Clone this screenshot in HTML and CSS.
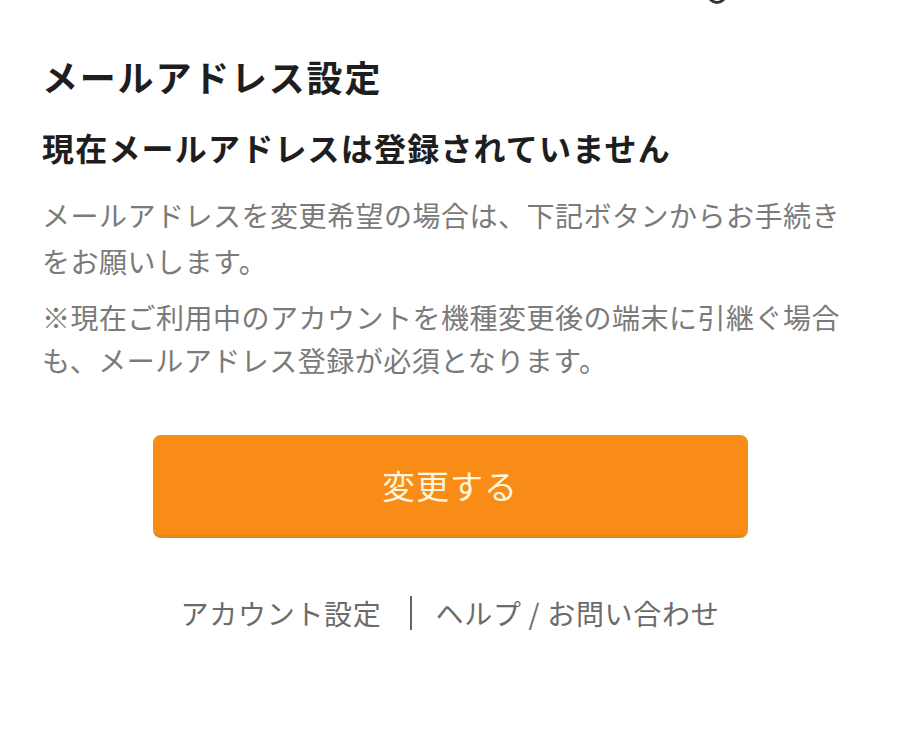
FILE: index.html
```html
<!DOCTYPE html>
<html lang="ja">
<head>
<meta charset="UTF-8" />
<meta name="viewport" content="width=device-width, initial-scale=1" />
<title>メールアドレス設定</title>
<link rel="stylesheet" href="styles.css">
</head>
<body>
<div class="top-edge"></div>
<div class="page">
  <h1 class="title">メールアドレス設定</h1>
  <h2 class="status">現在メールアドレスは登録されていません</h2>

  <p class="note">メールアドレスを変更希望の場合は、下記ボタンからお手続きをお願いします。</p>
  <p class="note">※現在ご利用中のアカウントを機種変更後の端末に引継ぐ場合も、メールアドレス登録が必須となります。</p>

  <div class="actions">
    <button class="change-btn">変更する</button>
  </div>

  <div class="links">
    <a href="#">アカウント設定</a>
    <span class="sep"></span>
    <a href="#">ヘルプ / お問い合わせ</a>
  </div>
</div>
</body>
</html>
```

FILE: styles.css
```css
body {
  margin: 0;
  background: #fff;
  font-family: "Noto Sans CJK JP", "Noto Sans", sans-serif;
  color: #222;
}
.top-edge {
  position: absolute;
  top: -16px;
  left: 707px;
  width: 14px;
  height: 14px;
  border: 3px solid #333;
  border-radius: 50%;
}
.page {
  padding: 51px 42px 0;
}
.title {
  margin: 0;
  font-size: 36px;
  line-height: 50px;
  letter-spacing: 1.8px;
  font-weight: 700;
  color: #1e1e1e;
}
.status {
  margin: 23px 0 0;
  font-size: 32px;
  line-height: 46px;
  letter-spacing: 1.2px;
  font-weight: 700;
  color: #1e1e1e;
}
.note {
  margin: 22px 0 0;
  font-size: 28px;
  line-height: 46px;
  letter-spacing: 0.5px;
  color: #7a7a7a;
}
.note + .note {
  margin-top: 12px;
  line-height: 43px;
}
.actions {
  display: flex;
  justify-content: center;
  margin-top: 53px;
}
.change-btn {
  width: 595px;
  height: 103px;
  border: none;
  border-bottom: 3px solid #dd8a20;
  border-radius: 8px;
  background: #f98c17;
  color: #fff4dc;
  font-family: inherit;
  font-size: 33px;
  letter-spacing: 1px;
  cursor: pointer;
}
.links {
  display: flex;
  justify-content: center;
  align-items: center;
  margin-top: 55px;
}
.links a {
  color: #6b6b6b;
  font-size: 28px;
  line-height: 40px;
  letter-spacing: 0.7px;
  text-decoration: none;
}
.sep {
  width: 2px;
  height: 34px;
  margin: 0 23px 0 29px;
  background: #666;
}
```
